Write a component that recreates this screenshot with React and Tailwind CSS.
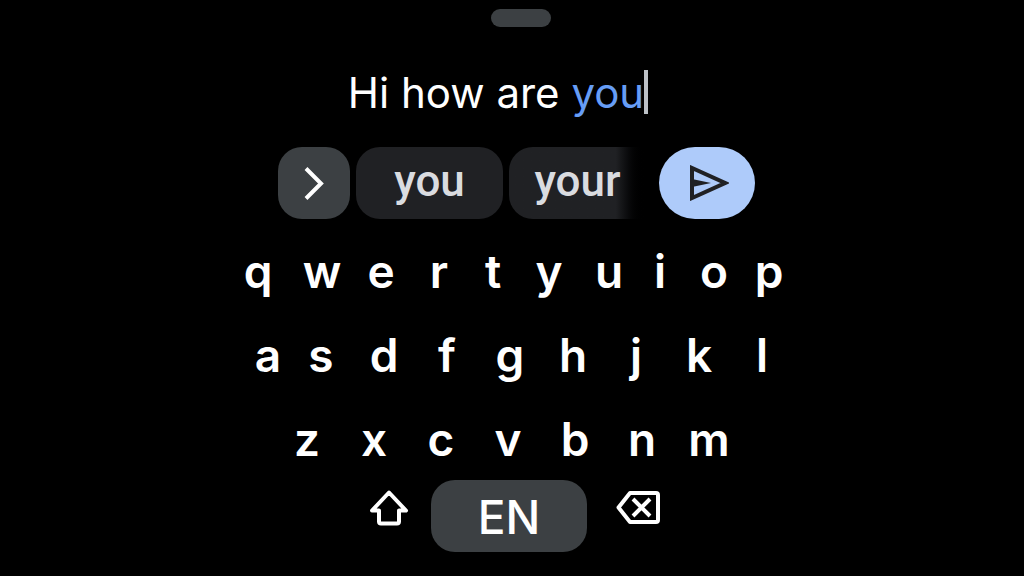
import React, { useState } from 'react';

const TOP_ROW = [
  { key: 'q', width: 'w-[60px]' },
  { key: 'w', width: 'w-[68px]' },
  { key: 'e', width: 'w-[50px]' },
  { key: 'r', width: 'w-[66px]' },
  { key: 't', width: 'w-[42px]' },
  { key: 'y', width: 'w-[70px]' },
  { key: 'u', width: 'w-[50px]' },
  { key: 'i', width: 'w-[52px]' },
  { key: 'o', width: 'w-[56px]' },
  { key: 'p', width: 'w-[54px]' },
];

const HOME_ROW = 'asdfghjkl'.split('').map((key) => ({
  key,
  width: key === 'a' ? 'w-[43px]' : 'w-[63px]',
}));

const BOTTOM_ROW = 'zxcvbnm'.split('').map((key) => ({ key, width: 'w-[67px]' }));

const ChevronIcon = () => (
  <svg className="w-6 h-9" viewBox="0 0 24 36" fill="none" stroke="white" strokeWidth="4">
    <path d="M4 3.5 19 18.5 4 33.5" />
  </svg>
);

const SendIcon = () => (
  <svg className="w-11 h-9" viewBox="0 0 44 36">
    <path d="M7 3v30L40 18z" fill="none" stroke="#202124" strokeWidth="4" />
    <path d="M7 14 26 18 7 22z" fill="#202124" />
  </svg>
);

const ShiftIcon = () => (
  <svg className="w-10 h-9" viewBox="0 0 40 36" fill="none" stroke="white" strokeWidth="4" strokeLinejoin="round">
    <path d="M20 2.5 37 20.5H30v11q0 2-2 2H12q-2 0-2-2v-11H3z" />
  </svg>
);

const BackspaceIcon = () => (
  <svg className="w-11 h-9" viewBox="0 0 44 36" fill="none" stroke="white" strokeWidth="4">
    <path d="M14 3h26q2 0 2 2v25q0 2-2 2H14L2.500 17.500z" strokeLinejoin="round" />
    <path d="m17 9 17 17m0-17-17 17" />
  </svg>
);

const KeyRow = ({ keys, onKey, className = '' }) => (
  <div className={`flex justify-center ${className}`}>
    {keys.map(({ key, width }) => (
      <button
        key={key}
        type="button"
        onClick={() => onKey(key)}
        className={`${width} h-[84px] pt-[2px] flex items-center justify-center font-semibold`}
      >
        {key}
      </button>
    ))}
  </div>
);

const App = () => {
  const [text, setText] = useState('Hi how are ');
  const [word, setWord] = useState('you');

  const typeKey = (key) => setWord((current) => current + key);

  const acceptWord = (suggestion) => {
    setText(`${text}${suggestion} `);
    setWord('');
  };

  return (
    <main className="min-h-screen bg-black text-white font-['Inter',sans-serif] pb-6">
      {/* Drag handle */}
      <div className="flex justify-center pt-[9px] pl-[18px]">
        <div className="w-[60px] h-[18px] rounded-full bg-[#3c4043]" />
      </div>

      {/* Message */}
      <div
        role="textbox"
        aria-label="Message"
        tabIndex={0}
        className="flex items-center justify-center h-[120px] pt-[10px] pr-[28px] text-[42px] whitespace-pre outline-none"
      >
        <span>{text}</span>
        <span className="text-[#669df6]">{word}</span>
        <span className="w-1 h-11 bg-[#bdc1c6]" />
      </div>

      {/* Suggestions */}
      <div className="flex justify-center pl-[9px] font-['Roboto',sans-serif] text-[44px] font-medium text-[#dadce0]">
        <button
          type="button"
          aria-label="More suggestions"
          className="w-[72px] h-[72px] mr-[6px] rounded-3xl bg-[#3c4043] flex items-center justify-center"
        >
          <ChevronIcon />
        </button>
        <button
          type="button"
          onClick={() => acceptWord('you')}
          className="w-[147px] h-[72px] mr-[6px] pb-[4px] rounded-3xl bg-[#202124] flex items-center justify-center"
        >
          you
        </button>
        <button
          type="button"
          onClick={() => acceptWord('your')}
          className="w-[137px] h-[72px] mr-[13px] pb-[4px] rounded-l-3xl bg-linear-to-r from-[#202124] from-78% to-black flex items-center justify-center"
        >
          your
        </button>
        <button
          type="button"
          aria-label="Send"
          className="w-24 h-[72px] rounded-full bg-[#aecbfa] flex items-center justify-center"
        >
          <SendIcon />
        </button>
      </div>

      {/* Keyboard */}
      <div className="pt-[9px] text-[46px]">
        <KeyRow keys={TOP_ROW} onKey={typeKey} />
        <KeyRow keys={HOME_ROW} onKey={typeKey} className="pl-4" />
        <KeyRow keys={BOTTOM_ROW} onKey={typeKey} className="pr-2" />

        <div className="flex justify-center pl-3">
          <button type="button" aria-label="Shift" className="w-[84px] h-14 flex items-center justify-center">
            <ShiftIcon />
          </button>
          <button
            type="button"
            aria-label="Keyboard language"
            className="w-[156px] h-[72px] pt-[2px] rounded-3xl bg-[#3c4043] flex items-center justify-center font-medium"
          >
            EN
          </button>
          <button
            type="button"
            aria-label="Backspace"
            onClick={() => setWord(word.slice(0, -1))}
            className="w-[102px] h-14 flex items-center justify-center"
          >
            <BackspaceIcon />
          </button>
        </div>
      </div>
    </main>
  );
};

export default App;
